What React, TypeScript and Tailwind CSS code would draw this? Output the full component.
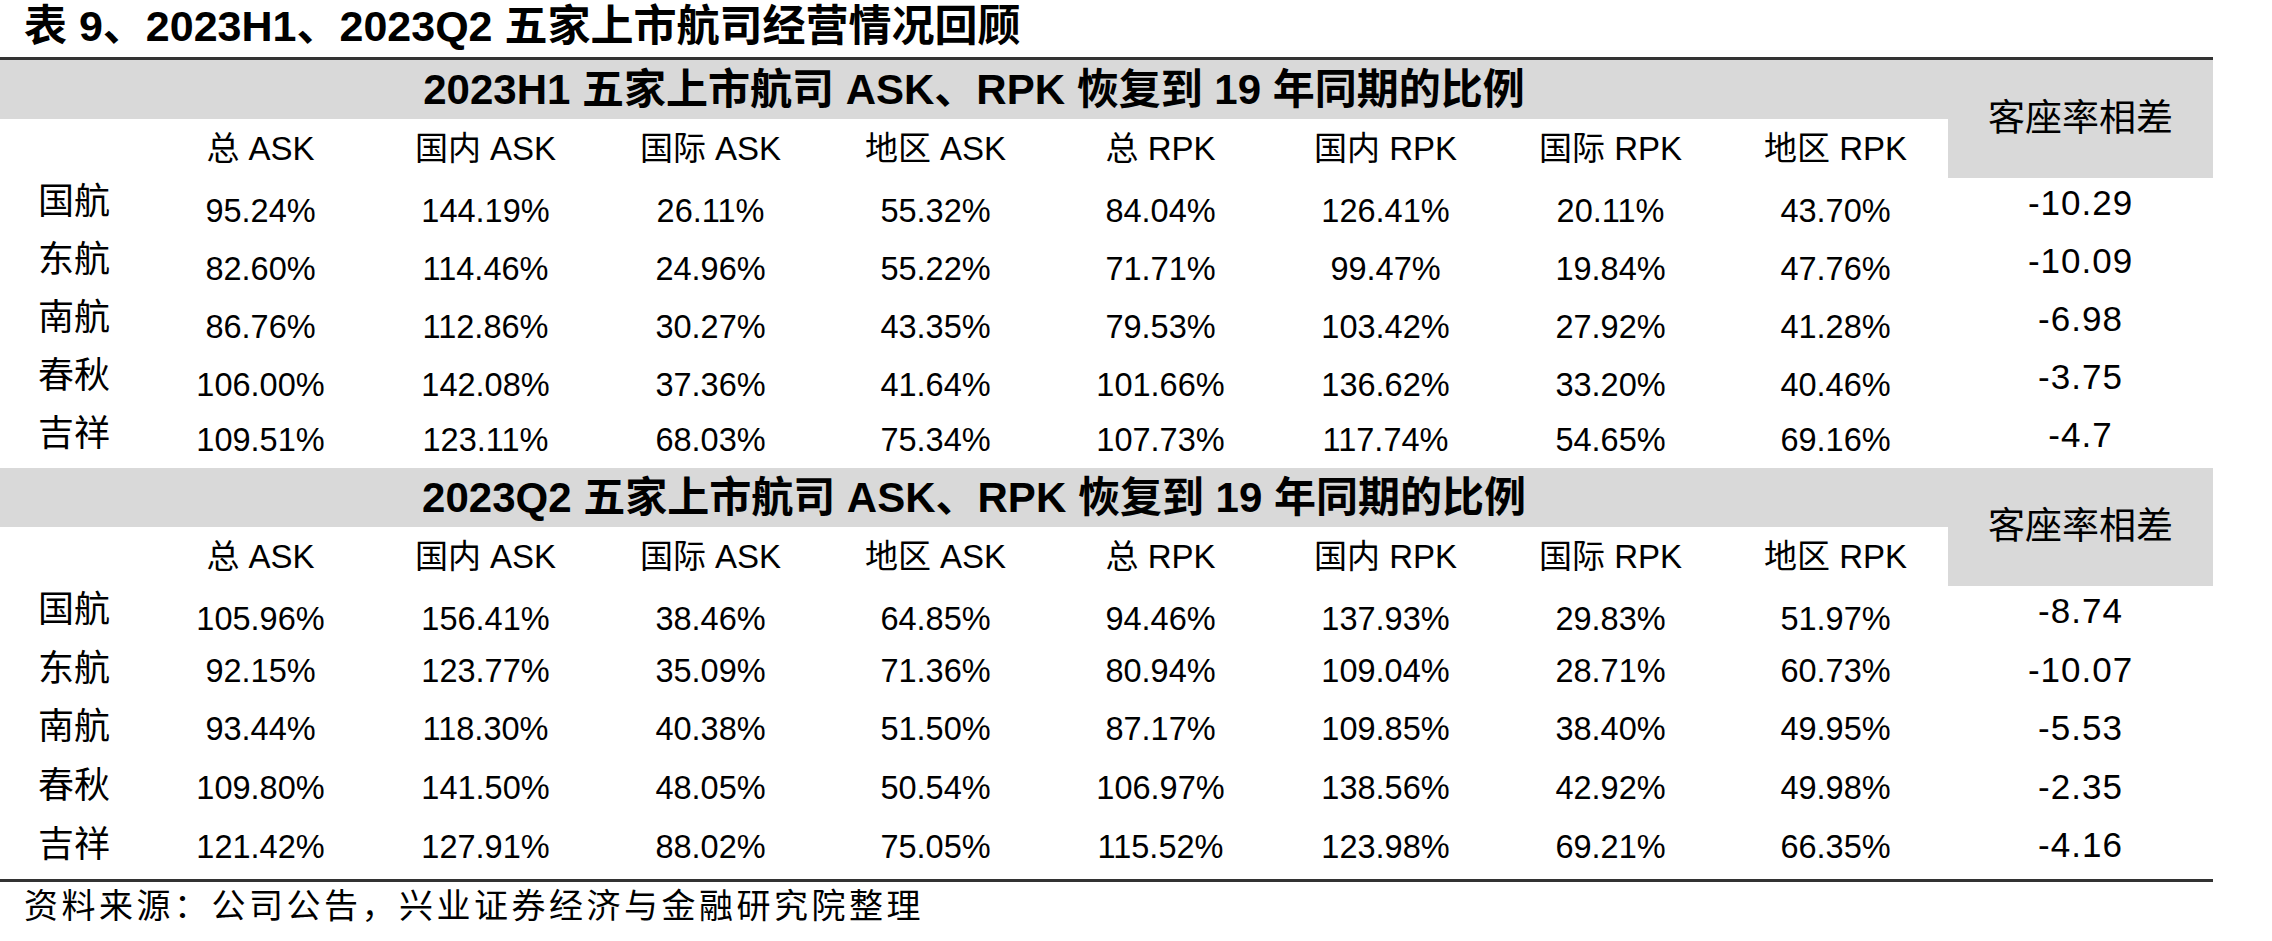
import React from "react";

const headers = ["总 ASK", "国内 ASK", "国际 ASK", "地区 ASK", "总 RPK", "国内 RPK", "国际 RPK", "地区 RPK"];

type Row = { name: string; values: string[]; gap: string; shift: string };

const sections: { title: string; rowH: string; rows: Row[] }[] = [
  {
    title: "2023H1 五家上市航司 ASK、RPK 恢复到 19 年同期的比例",
    rowH: "h-[58px]",
    rows: [
      { name: "国航", values: ["95.24%", "144.19%", "26.11%", "55.32%", "84.04%", "126.41%", "20.11%", "43.70%"], gap: "-10.29", shift: "pt-[8px]" },
      { name: "东航", values: ["82.60%", "114.46%", "24.96%", "55.22%", "71.71%", "99.47%", "19.84%", "47.76%"], gap: "-10.09", shift: "pt-[8px]" },
      { name: "南航", values: ["86.76%", "112.86%", "30.27%", "43.35%", "79.53%", "103.42%", "27.92%", "41.28%"], gap: "-6.98", shift: "pt-[8px]" },
      { name: "春秋", values: ["106.00%", "142.08%", "37.36%", "41.64%", "101.66%", "136.62%", "33.20%", "40.46%"], gap: "-3.75", shift: "pt-[8px]" },
      { name: "吉祥", values: ["109.51%", "123.11%", "68.03%", "75.34%", "107.73%", "117.74%", "54.65%", "69.16%"], gap: "-4.7", shift: "pt-[2px]" },
    ],
  },
  {
    title: "2023Q2 五家上市航司 ASK、RPK 恢复到 19 年同期的比例",
    rowH: "h-[58.6px]",
    rows: [
      { name: "国航", values: ["105.96%", "156.41%", "38.46%", "64.85%", "94.46%", "137.93%", "29.83%", "51.97%"], gap: "-8.74", shift: "pt-[8px]" },
      { name: "东航", values: ["92.15%", "123.77%", "35.09%", "71.36%", "80.94%", "109.04%", "28.71%", "60.73%"], gap: "-10.07", shift: "pb-[6px]" },
      { name: "南航", values: ["93.44%", "118.30%", "40.38%", "51.50%", "87.17%", "109.85%", "38.40%", "49.95%"], gap: "-5.53", shift: "pb-[6px]" },
      { name: "春秋", values: ["109.80%", "141.50%", "48.05%", "50.54%", "106.97%", "138.56%", "42.92%", "49.98%"], gap: "-2.35", shift: "pb-[6px]" },
      { name: "吉祥", values: ["121.42%", "127.91%", "88.02%", "75.05%", "115.52%", "123.98%", "69.21%", "66.35%"], gap: "-4.16", shift: "pb-[4px]" },
    ],
  },
];

function Section({ title, rowH, rows }: { title: string; rowH: string; rows: Row[] }) {
  return (
    <div className="grid grid-cols-[148px_repeat(8,225px)_265px]">
      {/* band + 客座率 block */}
      <div className="col-span-9 h-[59px] bg-[#d9d9d9] flex items-center justify-center text-[42px] font-bold">
        {title}
      </div>
      <div className="row-span-2 bg-[#d9d9d9] flex items-center justify-center text-[37px]">客座率相差</div>

      <div className="h-[59px]" />
      {headers.map((h) => (
        <div key={h} className="h-[59px] flex items-center justify-center text-[33px]">
          {h}
        </div>
      ))}

      {rows.map((r) => (
        <React.Fragment key={r.name}>
          <div className={`${rowH} flex items-center justify-center pb-[10px] text-[36px]`}>{r.name}</div>
          {r.values.map((v, i) => (
            <div key={i} className={`${rowH} flex items-center justify-center text-[32.5px] ${r.shift}`}>
              {v}
            </div>
          ))}
          <div className={`${rowH} flex items-center justify-center pb-[8px] text-[35px] tracking-[1px]`}>{r.gap}</div>
        </React.Fragment>
      ))}
    </div>
  );
}

export default function App() {
  return (
    <div className="w-[2272px] h-[941px] bg-white text-black font-['Liberation_Sans','Noto_Sans_CJK_SC',sans-serif]">
      <div className="w-[2213px]">
        {/* Title */}
        <div className="h-[57px] flex items-center pl-[24px] pb-[4px] text-[43px] font-bold leading-none">
          表 9、2023H1、2023Q2 五家上市航司经营情况回顾
        </div>

        <div className="border-t-[3px] border-b-[3px] border-[#333333]">
          {sections.map((s) => (
            <Section key={s.title} title={s.title} rowH={s.rowH} rows={s.rows} />
          ))}
        </div>

        <div className="h-[50px] flex items-center pl-[24px] text-[34px] tracking-[3.5px]">
          资料来源：公司公告，兴业证券经济与金融研究院整理
        </div>
      </div>
    </div>
  );
}
